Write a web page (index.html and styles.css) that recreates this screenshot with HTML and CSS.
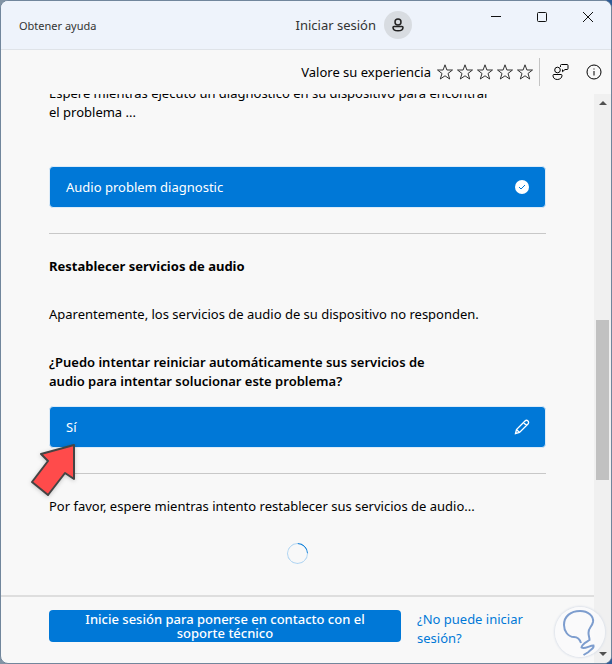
FILE: index.html
```html
<!DOCTYPE html>
<html lang="es">

<head>
    <meta charset="UTF-8" />
    <meta name="viewport" content="width=device-width, initial-scale=1.0" />
    <title>Obtener ayuda</title>

    <link rel="stylesheet" href="styles.css">
</head>

<body>

    <div class="window">
        <header class="titlebar">
            <h1 class="app-name">Obtener ayuda</h1>
            <button class="account">
                Iniciar sesión
                <span class="avatar">
                    <svg width="14" height="14" viewBox="0 0 14 14">
                        <circle cx="7" cy="4" r="3" />
                        <path d="M3 8.500h8a1 1 0 0 1 1 1c0 2-2 3.300-5 3.300s-5-1.300-5-3.300a1 1 0 0 1 1-1z" />
                    </svg>
                </span>
            </button>
            <div class="window-controls">
                <button aria-label="Minimizar"><svg width="12" height="12"><path d="M1 5.500h10" /></svg></button>
                <button aria-label="Maximizar"><svg width="12" height="12"><rect x="1.500" y="1.500" width="9" height="9" rx="1" /></svg></button>
                <button aria-label="Cerrar"><svg width="12" height="12"><path d="M1 1l10 10M11 1L1 11" /></svg></button>
            </div>
        </header>

        <div class="toolbar">
            <span>Valore su experiencia</span>
            <div class="stars">
                <button aria-label="1 estrella"><svg width="16" height="16"><use href="#star" /></svg></button>
                <button aria-label="2 estrellas"><svg width="16" height="16"><use href="#star" /></svg></button>
                <button aria-label="3 estrellas"><svg width="16" height="16"><use href="#star" /></svg></button>
                <button aria-label="4 estrellas"><svg width="16" height="16"><use href="#star" /></svg></button>
                <button aria-label="5 estrellas"><svg width="16" height="16"><use href="#star" /></svg></button>
            </div>
            <div class="tools">
                <button aria-label="Comentarios">
                    <svg width="18" height="18" viewBox="0 0 18 18">
                        <circle cx="6.500" cy="7" r="2.800" />
                        <path d="M3 11.500h7a1 1 0 0 1 1 1c0 2.300-2 4-4.700 4s-4.300-1.700-4.300-4a1 1 0 0 1 1-1z" />
                        <path d="M9.500 4V2.500a1 1 0 0 1 1-1H16a1 1 0 0 1 1 1v3a1 1 0 0 1-1 1h-2l-2.500 2.200V6.500" />
                    </svg>
                </button>
                <button aria-label="Información">
                    <svg width="16" height="16" viewBox="0 0 16 16">
                        <circle cx="8" cy="8" r="7" />
                        <path d="M8 7v4.500M8 4.500v1" />
                    </svg>
                </button>
            </div>
        </div>

        <div class="view">
            <div class="page">
                <main class="chat">
                    <div class="messages">
                        <p class="intro">Espere mientras ejecuto un diagnóstico en su dispositivo para encontrar el problema ...</p>
                        <button class="answer">
                            Audio problem diagnostic
                            <svg width="16" height="16" viewBox="0 0 16 16">
                                <circle cx="8" cy="8" r="7" fill="#fff" stroke="none" />
                                <path d="M5 8l2 2 4-4" stroke="#0078d7" />
                            </svg>
                        </button>
                        <hr>
                        <h2>Restablecer servicios de audio</h2>
                        <p class="status">Aparentemente, los servicios de audio de su dispositivo no responden.</p>
                        <p class="question">¿Puedo intentar reiniciar automáticamente sus servicios de audio para intentar solucionar este problema?</p>
                        <button class="answer">
                            Sí
                            <svg width="16" height="16" viewBox="0 0 16 16" stroke-width="1.300">
                                <path d="M1.500 14.500l1-4L11 2a2 2 0 0 1 3 3l-8.500 8.500zM9.500 3.500l3 3M2.500 10.500l3 3" />
                            </svg>
                            <span class="pointer">
                                <svg width="48" height="54" viewBox="0 0 48 54">
                                    <path d="M44 2L11 11l7 7L2 39l16 13 17-22 9 6z" />
                                </svg>
                            </span>
                        </button>
                        <hr>
                        <p class="wait">Por favor, espere mientras intento restablecer sus servicios de audio...</p>
                        <div class="spinner"></div>
                    </div>
                </main>

                <footer class="support">
                    <button class="sign-in">Inicie sesión para ponerse en contacto con el soporte técnico</button>
                    <a href="#">¿No puede iniciar sesión?</a>
                </footer>
            </div>

            <div class="scrollbar">
                <svg width="17" height="17"><path d="M5 11l4-4 4 4z" /></svg>
                <div class="track">
                    <div class="thumb"></div>
                </div>
                <svg width="17" height="17"><path d="M5 6h8l-4 4z" /></svg>
            </div>
        </div>
    </div>

    <!-- Floating bulb badge -->
    <div class="bulb">
        <svg width="50" height="50" viewBox="0 0 50 50">
            <path d="M26 36c-1-3-3-6-7-6-6 0-10-6-10-12C9 9 16 4 25 4c8 0 14 5 13 11-1 5-5 6-4.500 11 0 3 1 4 1 7-3 2-8 4-8 7.500 3 2 8-2 12-2 1 3-3 4-5 6.500l-5 3" />
        </svg>
    </div>

    <svg width="0" height="0" class="symbols">
        <symbol id="star" viewBox="0 0 16 16">
            <path d="M8 .8l1.900 5.200h5.600l-4.500 3.500 1.700 5.500L8 11.800 3.300 15 5 9.500.5 6h5.600z" />
        </symbol>
    </svg>

</body>

</html>
```
FILE: styles.css
```css
* {
    margin: 0;
    padding: 0;
    box-sizing: border-box;
}

body {
    height: 100vh;
    overflow: hidden;
    background: linear-gradient(90deg, #8294a5, #2c5a96);
    font-family: "Noto Sans", "Open Sans", sans-serif;
    font-size: 13px;
    line-height: 19px;
    color: #000;
}

button {
    font: inherit;
    color: inherit;
    background: none;
    border: none;
    cursor: pointer;
}

svg {
    display: block;
    fill: none;
    stroke: currentColor;
    flex-shrink: 0;
}

.symbols {
    position: absolute;
}

.window {
    height: 100vh;
    display: flex;
    flex-direction: column;
    background-color: #f8f8f8;
    border: 1px solid #71869c;
    border-radius: 8px;
    overflow: hidden;
}

/* Title bar */
.titlebar {
    display: flex;
    align-items: center;
    height: 49px;
    padding-left: 18px;
    background-color: #eef3fb;
    border-bottom: 1px solid #dfe3e8;
    color: #333;
}

.app-name {
    font-size: 11px;
    font-weight: normal;
}

.account {
    display: flex;
    align-items: center;
    gap: 8px;
    margin-left: auto;
    margin-right: 61px;
}

.avatar {
    display: flex;
    align-items: center;
    justify-content: center;
    width: 28px;
    height: 28px;
    border-radius: 50%;
    background-color: #d8dce1;
}

.avatar svg {
    stroke: #222;
    stroke-width: 1.5;
}

.window-controls {
    display: flex;
    align-self: flex-start;
    color: #111;
}

.window-controls button {
    display: flex;
    align-items: center;
    justify-content: center;
    width: 46px;
    height: 32px;
}

/* Rating bar */
.toolbar {
    display: flex;
    align-items: center;
    justify-content: flex-end;
    height: 44px;
    padding-right: 9px;
}

.stars {
    display: flex;
    gap: 4px;
    padding: 0 6px;
    color: #333;
}

.tools {
    display: flex;
    align-items: center;
    gap: 17px;
    height: 28px;
    padding-left: 11px;
    border-left: 1px solid #c4c4c4;
}

/* Conversation */
.view {
    flex: 1;
    min-height: 0;
    display: flex;
}

.page {
    flex: 1;
    display: flex;
    flex-direction: column;
}

.chat {
    flex: 1;
    min-height: 0;
    overflow: hidden;
    padding: 0 48px;
}

/* the conversation is scrolled, so its first line is cut */
.messages {
    margin-top: -10px;
}

.intro {
    max-width: 450px;
    margin-bottom: 44px;
}

.answer {
    position: relative;
    display: flex;
    align-items: center;
    justify-content: space-between;
    width: 100%;
    height: 42px;
    padding: 0 15px 0 16px;
    border: 1px solid #dcebf8;
    border-radius: 4px;
    background-color: #0078d7;
    color: #fff;
    text-align: left;
}

hr {
    margin: 25px 0 23px;
    border: none;
    border-top: 1px solid #c8c8c8;
}

h2 {
    margin-bottom: 29px;
    font-size: 13px;
    font-weight: bold;
}

.status {
    margin-bottom: 29px;
}

.question {
    max-width: 400px;
    margin-bottom: 15px;
    font-weight: 600;
}

.wait {
    margin-bottom: 27px;
}

.pointer {
    position: absolute;
    left: -20px;
    top: 36px;
}

.pointer svg {
    fill: #ff4b4b;
    stroke: #444;
    stroke-width: 2;
    stroke-linejoin: round;
    filter: drop-shadow(0 1px 2px rgba(0, 0, 0, 0.2));
}

.spinner {
    width: 21px;
    height: 21px;
    margin: 0 auto;
    border: 1px solid #b3d6f2;
    border-top-color: #0078d7;
    border-radius: 50%;
    transform: rotate(45deg);
}

/* Footer */
.support {
    display: flex;
    align-items: flex-start;
    gap: 16px;
    padding: 13px 48px 15px;
    border-top: 2px solid #dedede;
}

.sign-in {
    width: 352px;
    height: 32px;
    padding: 0 32px;
    border-radius: 4px;
    background-color: #0078d7;
    color: #fff;
    font-weight: 500;
    line-height: 14px;
}

.support a {
    flex: 1;
    color: #0078d7;
    text-decoration: none;
}

/* Scrollbar */
.scrollbar {
    display: flex;
    flex-direction: column;
    width: 17px;
    background-color: #f0f0f0;
}

.scrollbar svg {
    fill: #505050;
    stroke: none;
}

.track {
    flex: 1;
    padding: 0 2px;
}

.track::before {
    content: "";
    display: block;
    height: 39%;
}

.thumb {
    height: 30%;
    background-color: #c1c1c1;
}

.bulb {
    position: fixed;
    right: 7px;
    bottom: 7px;
    border-radius: 50%;
    background-color: rgba(250, 250, 252, 0.85);
    box-shadow: 0 0 2px 1px #dde2ea;
}

.bulb svg {
    stroke: #7d9dce;
    stroke-width: 2;
}
```
